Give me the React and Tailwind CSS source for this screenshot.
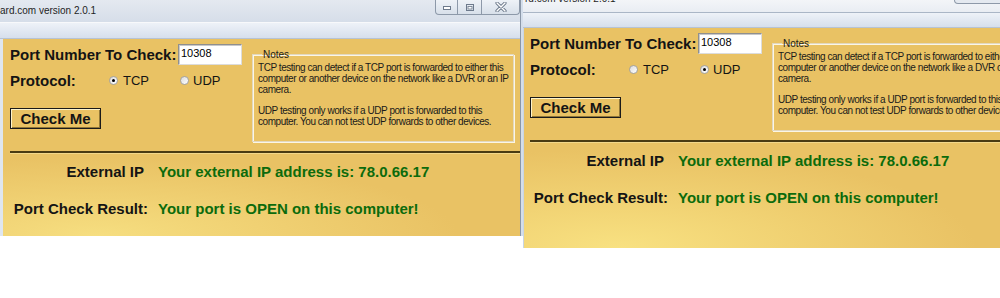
import React from "react";

function Radio({ checked }) {
  return (
    <span className="flex h-[9px] w-[9px] shrink-0 items-center justify-center rounded-full border border-[#a3a3a3] bg-linear-to-br from-[#dcdcdc] to-white">
      {checked ? <span className="h-[3px] w-[3px] rounded-full bg-black" /> : null}
    </span>
  );
}

function Body({ selected }) {
  return (
    <div className="pl-[7px] pt-[5px] text-[#141414]">
      <div className="flex items-start">
        <div className="w-[242px] shrink-0">
          <div className="flex h-[21px] items-center">
            <span className="w-[168px] shrink-0 whitespace-nowrap text-[15px] font-bold leading-none">
              Port Number To Check:
            </span>
            <div className="h-[21px] w-[64px] shrink-0 border border-[#8f8f8f] border-b-[#dcdcdc] border-r-[#dcdcdc] bg-white pl-[2px] pt-[3px] text-[11px] leading-none text-black shadow-[inset_1px_1px_0_#c8c8c8]">
              10308
            </div>
          </div>
          <div className="mt-[5px] flex h-[20px] items-center">
            <span className="w-[99px] shrink-0 text-[15px] font-bold leading-none">Protocol:</span>
            <Radio checked={selected === "TCP"} />
            <span className="ml-[5px] w-[57px] shrink-0 text-[13px] leading-none">TCP</span>
            <Radio checked={selected === "UDP"} />
            <span className="ml-[4px] text-[13px] leading-none">UDP</span>
          </div>
          <button className="mt-[18px] flex h-[21px] w-[91px] items-center justify-center border border-[#1a1a1a] bg-[#e9c264] text-[15px] font-bold leading-none text-[#141414] shadow-[inset_1px_1px_0_#fff4c8,inset_-1px_-1px_0_#8f7638]">
            Check Me
          </button>
        </div>
        <fieldset className="mt-[5px] h-[93px] w-[260px] shrink-0 border border-[#e2d8bf] px-[5px] shadow-[inset_1px_1px_0_#fbf6e6,1px_1px_0_#fbf6e6]">
          <legend className="ml-[4px] px-[1px] text-[10px] leading-[11px] text-[#1a1a1a]">Notes</legend>
          <div className="mt-[2px] whitespace-nowrap text-[10px] leading-[11px] tracking-[-0.45px] text-[#1a1a1a]">
            TCP testing can detect if a TCP port is forwarded to either this
            <br />
            computer or another device on the network like a DVR or an IP
            <br />
            camera.
          </div>
          <div className="mt-[10px] whitespace-nowrap text-[10px] leading-[11px] tracking-[-0.45px] text-[#1a1a1a]">
            UDP testing only works if a UDP port is forwarded to this
            <br />
            computer. You can not test UDP forwards to other devices.
          </div>
        </fieldset>
      </div>
      <div className="mt-[9px] h-[2px] bg-[#4a3b12] shadow-[0_1px_0_#f3d88a]" />
      <div className="mt-[10px] flex h-[18px] items-center whitespace-nowrap text-[15px] font-bold leading-[18px]">
        <span className="w-[138px] shrink-0 pr-[4px] text-right">External IP</span>
        <span className="ml-[10px] text-[#0c6b0c]">Your external IP address is: 78.0.66.17</span>
      </div>
      <div className="mt-[19px] flex h-[18px] items-center whitespace-nowrap text-[15px] font-bold leading-[18px]">
        <span className="w-[138px] shrink-0 text-right">Port Check Result:</span>
        <span className="ml-[10px] text-[#0c6b0c]">Your port is OPEN on this computer!</span>
      </div>
    </div>
  );
}

function TitleButtons() {
  return (
    <div className="flex h-[15px] rounded-b-[4px] border border-t-0 border-[#8d99a9] bg-linear-to-b from-[#eef2f7] to-[#d8e0ea]">
      <div className="flex w-[22px] items-center justify-center border-r border-[#8d99a9]">
        <svg width="10" height="8" viewBox="0 0 10 8">
          <rect x="1.5" y="3.5" width="7" height="3" fill="#fff" stroke="#6d7a8c" />
        </svg>
      </div>
      <div className="flex w-[24px] items-center justify-center border-r border-[#8d99a9]">
        <svg width="10" height="9" viewBox="0 0 10 9">
          <rect x="1.5" y="1.5" width="7" height="6" fill="none" stroke="#6d7a8c" />
          <rect x="3" y="3.5" width="4" height="2.5" fill="#fff" stroke="#6d7a8c" strokeWidth="0.8" />
        </svg>
      </div>
      <div className="flex w-[37px] items-center justify-center">
        <svg width="12" height="10" viewBox="0 0 12 10">
          <path d="M2 1 L10 9 M10 1 L2 9" stroke="#6d7a8c" strokeWidth="3.2" strokeLinecap="round" />
          <path d="M2 1 L10 9 M10 1 L2 9" stroke="#ffffff" strokeWidth="1.4" strokeLinecap="round" />
        </svg>
      </div>
    </div>
  );
}

export default function App() {
  return (
    <div
      className="flex h-[298px] w-[1000px] items-start overflow-hidden bg-white"
      style={{ fontFamily: '"Liberation Sans", Arial, sans-serif' }}
    >
      {/* Left window */}
      <div className="flex h-[236px] w-[523px] shrink-0">
        <div className="flex w-[520px] flex-col">
          <div className="flex h-[22px] items-start justify-between bg-linear-to-b from-[#e4e9f0] to-[#d6dee9]">
            <span className="pt-[5px] text-[10px] leading-[11px] text-[#1e1e1e]">ard.com version 2.0.1</span>
            <TitleButtons />
          </div>
          <div className="h-[17px] border-t border-b border-t-[#f8f9fb] border-b-[#b7c3d3] bg-linear-to-b from-[#eef2f8] to-[#d6dfec]" />
          <div className="flex-1 border-l-[3px] border-[#dfe6ef] bg-[radial-gradient(ellipse_70%_40%_at_18%_100%,#f6de80,#e9c264)]">
            <Body selected="TCP" />
          </div>
        </div>
        <div className="h-full w-[3px] border-l border-[#8a97a8] bg-[#d4deeb]" />
      </div>

      {/* Right window */}
      <div className="flex h-[248px] w-[477px] shrink-0 flex-col overflow-hidden">
        <div className="flex h-[12px] items-start justify-between bg-linear-to-b from-[#f3f5f8] to-[#e9edf3]">
          <span className="-mt-[7px] pl-[2px] text-[10px] leading-[11px] text-[#1e1e1e]">rd.com version 2.0.1</span>
          <div className="mr-[-10px] h-[4px] w-[56px] rounded-b-[4px] border border-t-0 border-[#8d99a9] bg-[#e4e9f0]" />
        </div>
        <div className="h-[16px] border-t border-b border-t-[#aab6c6] border-b-[#b7c3d3] bg-linear-to-b from-[#eef2f8] to-[#d6dfec]" />
        <div className="flex-1 border-l border-[#c9d5e4] bg-[radial-gradient(ellipse_75%_45%_at_20%_100%,#f8e181,#e9c264)]">
          <div className="-ml-px">
            <Body selected="UDP" />
          </div>
        </div>
      </div>
    </div>
  );
}
